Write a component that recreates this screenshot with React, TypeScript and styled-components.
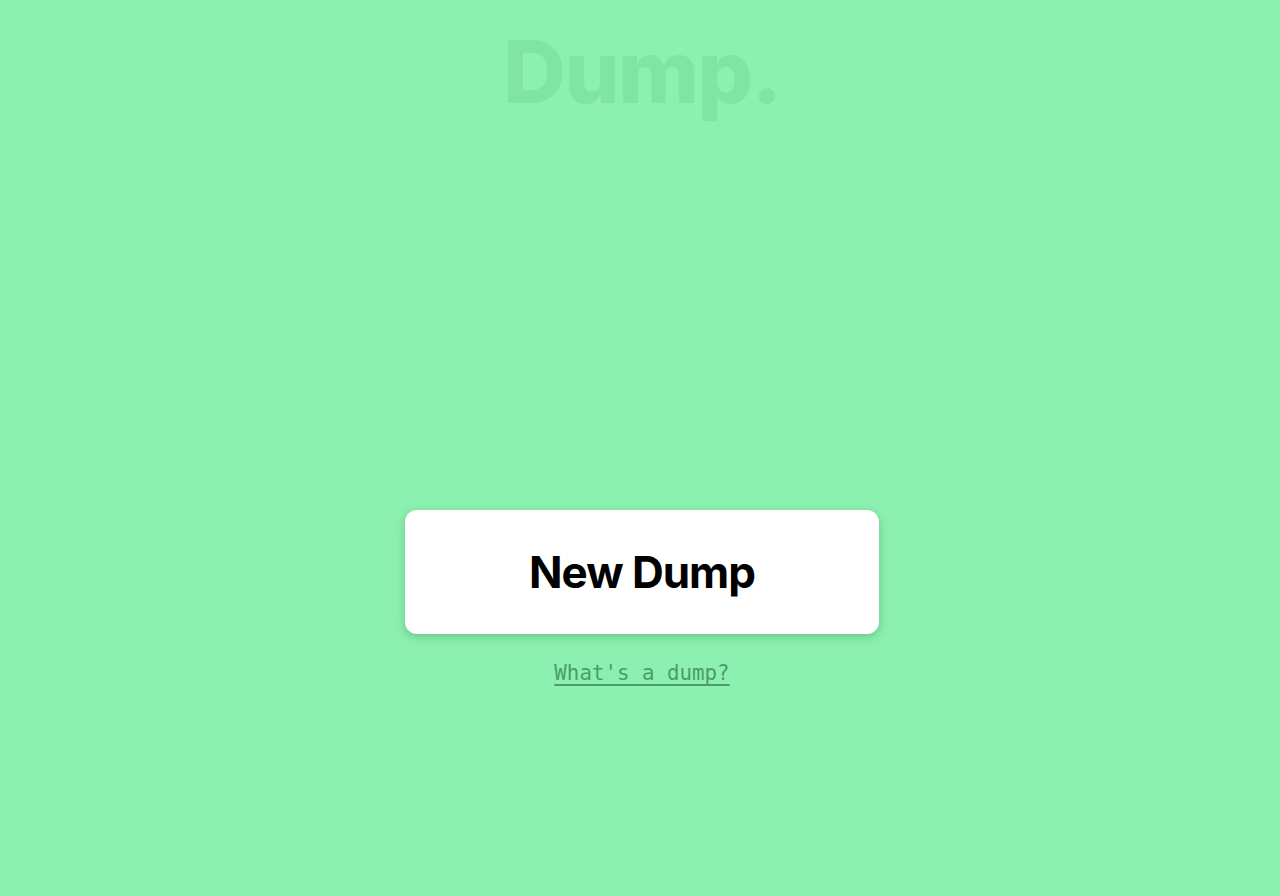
import React from "react";
import styled, { createGlobalStyle } from "styled-components";

const Global = createGlobalStyle`
  html, body { margin: 0; padding: 0; background: #8cf0b0; }
  body { font-family: Inter, "Noto Sans", sans-serif; }
`;

const Page = styled.div`
  min-height: 896px;
  padding-left: 4px;
  display: flex;
  flex-direction: column;
  align-items: center;
  background: #8cf0b0;
`;

const Title = styled.h1`
  margin: 0;
  padding-top: 20px;
  font-family: Inter, sans-serif;
  font-weight: 800;
  font-size: 87px;
  line-height: 104px;
  letter-spacing: -1.4px;
  color: #80e4a3;
`;

const Main = styled.main`
  margin-top: 386px;
  display: flex;
  flex-direction: column;
  align-items: center;
  gap: 27px;
`;

const NewButton = styled.button`
  width: 474px;
  height: 124px;
  border: none;
  border-radius: 12px;
  background: #ffffff;
  box-shadow: 0 3px 8px rgba(40, 120, 70, 0.35);
  font-family: Inter, sans-serif;
  font-weight: 700;
  font-size: 44px;
  letter-spacing: -1px;
  color: #000;
  cursor: pointer;
`;

const Link = styled.a`
  font-family: "DejaVu Sans Mono", monospace;
  font-size: 20.8px;
  color: #4c9c6c;
  text-decoration: underline;
  text-decoration-thickness: 1.5px;
  text-underline-offset: 4px;
`;

export default function App() {
  return (
    <>
      <Global />
      <Page>
        <Title>Dump.</Title>
        <Main>
          <NewButton>New Dump</NewButton>
          <Link href="#">What's a dump?</Link>
        </Main>
      </Page>
    </>
  );
}
